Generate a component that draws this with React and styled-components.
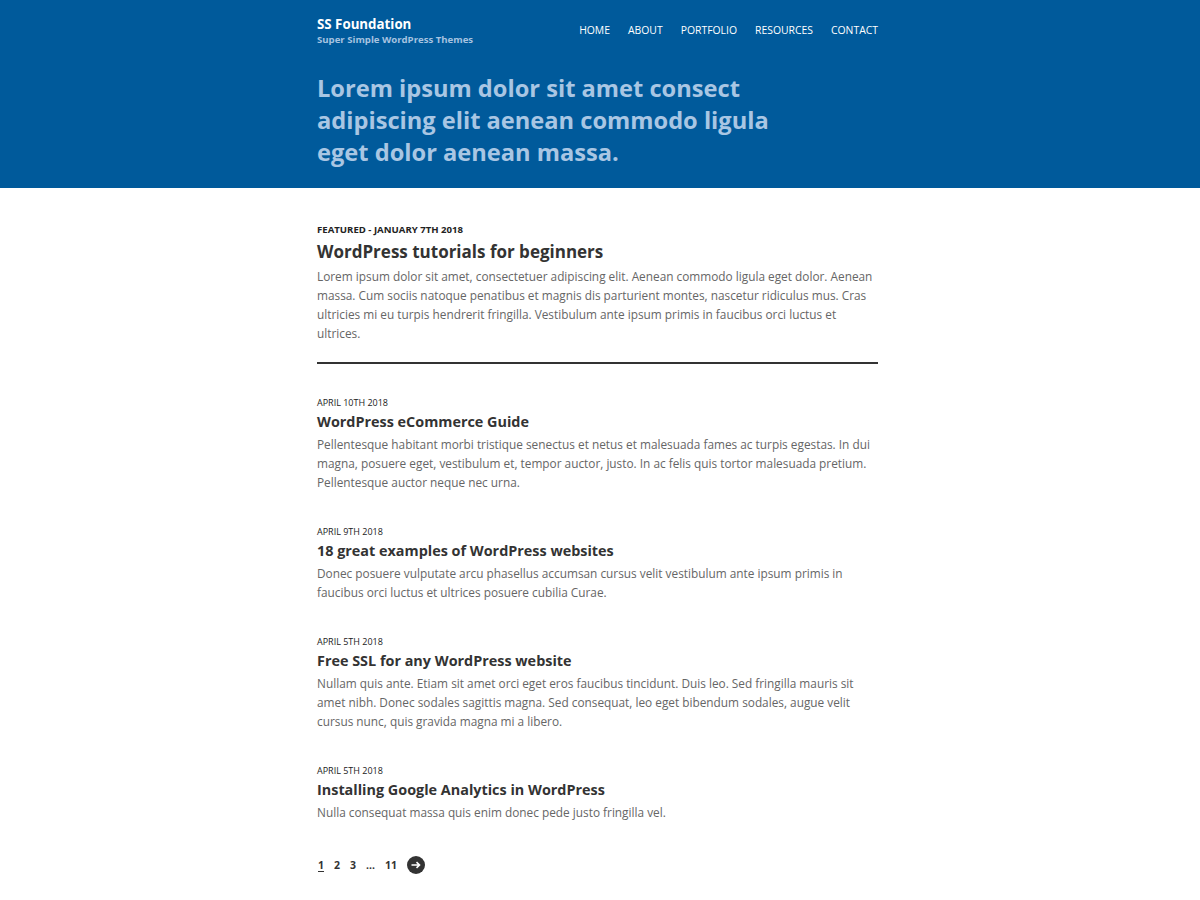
import React from 'react'
import styled, { createGlobalStyle } from 'styled-components'

const GlobalStyle = createGlobalStyle`
	html, body {
		margin: 0;
		padding: 0;
		background: #fff;
	}
	body {
		font-family: 'Open Sans', 'Noto Sans', sans-serif;
		color: #333;
		-webkit-font-smoothing: antialiased;
	}
	* {
		box-sizing: border-box;
	}
`

const Header = styled.header`
	background: #005a9b;
	height: 188px;
`

const Inner = styled.div`
	width: 561px;
	margin-left: calc(50% - 283px);
`

const TopBar = styled.div`
	display: flex;
	justify-content: space-between;
	align-items: flex-start;
	padding-top: 15px;
`

const Brand = styled.div`
	display: flex;
	flex-direction: column;
	h1 {
		margin: 0;
		font-size: 13.3px;
		line-height: 18px;
		font-weight: 700;
		color: #fff;
	}
	p {
		margin: 0;
		font-size: 9.6px;
		line-height: 14px;
		font-weight: 700;
		color: #a6c3e0;
	}
`

const Nav = styled.nav`
	display: flex;
	gap: 18px;
	padding-top: 8px;
	a {
		color: #fff;
		font-size: 10.4px;
		line-height: 14px;
		text-decoration: none;
		text-transform: uppercase;
	}
`

const Hero = styled.h2`
	margin: 25px 0 0;
	max-width: 470px;
	font-size: 23.65px;
	line-height: 32px;
	font-weight: 700;
	color: #a9c6e3;
`

const Main = styled.main`
	padding-top: 36px;
`

const Post = styled.article`
	padding-bottom: ${(props) => (props.featured ? '19px' : '0')};
	border-bottom: ${(props) => (props.featured ? '2px solid #333' : 'none')};
	margin-bottom: ${(props) => (props.featured ? '33px' : '34px')};
`

const Meta = styled.div`
	font-size: ${(props) => (props.featured ? '9.6px' : '9px')};
	line-height: 12px;
	font-weight: ${(props) => (props.featured ? 700 : 400)};
	text-transform: uppercase;
	color: #222;
`

const Title = styled.h3`
	margin: ${(props) => (props.featured ? '3px 0 2px' : '3px 0 3px')};
	font-size: ${(props) => (props.featured ? '17px' : '14.4px')};
	line-height: ${(props) => (props.featured ? '26px' : '20px')};
	font-weight: 700;
	color: #333;
`

const Excerpt = styled.p`
	margin: 0;
	font-size: 11.83px;
	line-height: 19px;
	color: #666;
`

const Pager = styled.div`
	display: flex;
	align-items: center;
	gap: 10px;
	margin-top: 2px;
	padding-bottom: 40px;
	padding-left: 1px;
	a, span {
		font-size: 10.5px;
		font-weight: 700;
		color: #333;
		text-decoration: none;
	}
	a.current {
		text-decoration: underline;
		text-underline-offset: 2px;
	}
`

const NextButton = styled.a`
	display: flex;
	align-items: center;
	justify-content: center;
	width: 18px;
	height: 18px;
	border-radius: 50%;
	background: #333;
`

const posts = [
	{
		date: 'April 10th 2018',
		title: 'WordPress eCommerce Guide',
		text: 'Pellentesque habitant morbi tristique senectus et netus et malesuada fames ac turpis egestas. In dui magna, posuere eget, vestibulum et, tempor auctor, justo. In ac felis quis tortor malesuada pretium. Pellentesque auctor neque nec urna.',
	},
	{
		date: 'April 9th 2018',
		title: '18 great examples of WordPress websites',
		text: 'Donec posuere vulputate arcu phasellus accumsan cursus velit vestibulum ante ipsum primis in faucibus orci luctus et ultrices posuere cubilia Curae.',
	},
	{
		date: 'April 5th 2018',
		title: 'Free SSL for any WordPress website',
		text: 'Nullam quis ante. Etiam sit amet orci eget eros faucibus tincidunt. Duis leo. Sed fringilla mauris sit amet nibh. Donec sodales sagittis magna. Sed consequat, leo eget bibendum sodales, augue velit cursus nunc, quis gravida magna mi a libero.',
	},
	{
		date: 'April 5th 2018',
		title: 'Installing Google Analytics in WordPress',
		text: 'Nulla consequat massa quis enim donec pede justo fringilla vel.',
	},
]

export default function App() {
	return (
		<>
			<GlobalStyle />
			<Header>
				<Inner>
					<TopBar>
						<Brand>
							<h1>SS Foundation</h1>
							<p>Super Simple WordPress Themes</p>
						</Brand>
						<Nav>
							<a href="#">Home</a>
							<a href="#">About</a>
							<a href="#">Portfolio</a>
							<a href="#">Resources</a>
							<a href="#">Contact</a>
						</Nav>
					</TopBar>
					<Hero>
						Lorem ipsum dolor sit amet consect adipiscing elit aenean commodo ligula eget
						dolor aenean massa.
					</Hero>
				</Inner>
			</Header>
			<Main>
				<Inner>
					<Post featured>
						<Meta featured>Featured - January 7th 2018</Meta>
						<Title featured>WordPress tutorials for beginners</Title>
						<Excerpt>
							Lorem ipsum dolor sit amet, consectetuer adipiscing elit. Aenean commodo ligula
							eget dolor. Aenean massa. Cum sociis natoque penatibus et magnis dis parturient
							montes, nascetur ridiculus mus. Cras ultricies mi eu turpis hendrerit fringilla.
							Vestibulum ante ipsum primis in faucibus orci luctus et ultrices.
						</Excerpt>
					</Post>
					{posts.map((p) => (
						<Post key={p.title}>
							<Meta>{p.date}</Meta>
							<Title>{p.title}</Title>
							<Excerpt>{p.text}</Excerpt>
						</Post>
					))}
					<Pager>
						<a className="current" href="#">1</a>
						<a href="#">2</a>
						<a href="#">3</a>
						<span>…</span>
						<a href="#">11</a>
						<NextButton href="#" aria-label="Next">
							<svg width="10" height="8" viewBox="0 0 10 8">
								<path d="M0.5 4h7.5M5.5 1.2L8.5 4 5.5 6.8" stroke="#fff" strokeWidth="1.6" fill="none" />
							</svg>
						</NextButton>
					</Pager>
				</Inner>
			</Main>
		</>
	)
}
